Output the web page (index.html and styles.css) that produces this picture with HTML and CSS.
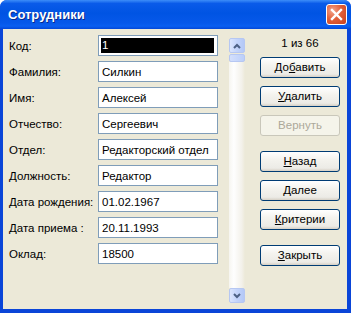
FILE: index.html
```html
<html>
    <head>
        <meta charset="utf-8">
        <link rel="stylesheet" href="styles.css">
    </head>
    <body>
        <div class="window">
            <div class="titlebar">
                <div class="title">Сотрудники</div>
                <div class="close">
                    <svg width="13" height="13" viewBox="0 0 13 13">
                        <path d="M2 2 L11 11 M11 2 L2 11" stroke="#fff" stroke-width="2.4" stroke-linecap="square"/>
                    </svg>
                </div>
            </div>
            <div class="frame">
                <div class="form">
                    <div class="row"><div class="label">Код:</div><div class="field"><span class="sel">1</span></div></div>
                    <div class="row"><div class="label">Фамилия:</div><div class="field">Силкин</div></div>
                    <div class="row"><div class="label">Имя:</div><div class="field">Алексей</div></div>
                    <div class="row"><div class="label">Отчество:</div><div class="field">Сергеевич</div></div>
                    <div class="row"><div class="label">Отдел:</div><div class="field">Редакторский отдел</div></div>
                    <div class="row"><div class="label">Должность:</div><div class="field">Редактор</div></div>
                    <div class="row"><div class="label">Дата рождения:</div><div class="field">01.02.1967</div></div>
                    <div class="row"><div class="label">Дата приема :</div><div class="field">20.11.1993</div></div>
                    <div class="row"><div class="label">Оклад:</div><div class="field">18500</div></div>
                </div>
                <div class="scroll">
                    <div class="sb-btn">
                        <svg width="8" height="6" viewBox="0 0 8 6"><path d="M1 5 L4 2 L7 5" stroke="#4d6185" stroke-width="2" fill="none"/></svg>
                    </div>
                    <div class="thumb"></div>
                    <div class="track"></div>
                    <div class="sb-btn">
                        <svg width="8" height="6" viewBox="0 0 8 6"><path d="M1 1 L4 4 L7 1" stroke="#4d6185" stroke-width="2" fill="none"/></svg>
                    </div>
                </div>
                <div class="side">
                    <div class="counter">1 из 66</div>
                    <div class="btn">До<u>б</u>авить</div>
                    <div class="btn"><u>У</u>далить</div>
                    <div class="btn disabled">Вернуть</div>
                    <div class="btn spaced"><u>Н</u>азад</div>
                    <div class="btn"><u>Д</u>алее</div>
                    <div class="btn"><u>К</u>ритерии</div>
                    <div class="btn spaced"><u>З</u>акрыть</div>
                </div>
            </div>
        </div>
    </body>
</html>
```

FILE: styles.css
```css
body {
    margin: 0;
    font-family: "Liberation Sans", Arial, sans-serif;
    font-size: 11.5px;
    color: #000;
    background: #fff;
}
.window {
    width: 351px;
    height: 313px;
    display: flex;
    flex-direction: column;
    background: #0a45d8;
    border-radius: 7px 7px 0 0;
    overflow: hidden;
}
.titlebar {
    height: 29px;
    flex-shrink: 0;
    display: flex;
    align-items: center;
    padding: 0 4px 0 8px;
    background: linear-gradient(#3d8ef9, #0a5be9 12%, #0054e3 45%, #0658ea 80%, #0a5ff1 90%, #0347d8);
}
.title {
    flex: 1;
    color: #fff;
    font-weight: bold;
    font-size: 13px;
    text-shadow: 1px 1px #0a2a8c;
}
.close {
    width: 21px;
    height: 21px;
    box-sizing: border-box;
    border: 1px solid #fff;
    border-radius: 3px;
    display: flex;
    align-items: center;
    justify-content: center;
    background: radial-gradient(circle at 30% 30%, #f3a58c, #e2603a 45%, #c9401c);
}
.frame {
    flex: 1;
    margin: 0 4px 4px 3px;
    background: #ece9d8;
    display: flex;
    padding: 6px 7px 0 6px;
}
.form {
    display: flex;
    flex-direction: column;
    gap: 5px;
}
.row {
    display: flex;
    align-items: center;
    height: 21px;
}
.label {
    width: 89px;
}
.field {
    width: 120px;
    height: 21px;
    box-sizing: border-box;
    border: 1px solid #7f9db9;
    background: #fff;
    padding-left: 3px;
    display: flex;
    align-items: center;
}
.sel {
    flex: 1;
    margin: 2px 3px 2px -1px;
    height: 15px;
    line-height: 15px;
    padding-left: 1px;
    background: #000;
    color: #fff;
}
.scroll {
    width: 16px;
    height: 265px;
    margin: 3px 0 0 11px;
    display: flex;
    flex-direction: column;
}
.sb-btn {
    height: 15px;
    box-sizing: border-box;
    border: 1px solid #b6c7f2;
    border-radius: 2px;
    background: linear-gradient(to right, #dbe5fd, #c3d4fb 50%, #b4c8f6);
    display: flex;
    align-items: center;
    justify-content: center;
}
.thumb {
    height: 8px;
    margin-top: 1px;
    box-sizing: border-box;
    border: 1px solid #b6c7f2;
    border-radius: 2px;
    background: linear-gradient(to right, #d3dffc, #bccffa);
}
.track {
    flex: 1;
    background: linear-gradient(to right, #f6f5f0, #fefefe 30%, #f3f1ea 80%, #ece9d8);
}
.side {
    width: 80px;
    margin-left: 15px;
    display: flex;
    flex-direction: column;
}
.counter {
    height: 22px;
    line-height: 17px;
    text-align: center;
}
.btn {
    height: 21px;
    margin-bottom: 8px;
    box-sizing: border-box;
    border: 1px solid #003c74;
    border-radius: 3px;
    background: linear-gradient(#fff, #f4f3ee 40%, #ecebe6 85%, #d6d0c5);
    text-align: center;
    line-height: 19px;
}
.btn.disabled {
    border-color: #c9c7ba;
    background: #f5f4ea;
    color: #aca899;
}
.btn.spaced {
    margin-top: 7px;
}
```
